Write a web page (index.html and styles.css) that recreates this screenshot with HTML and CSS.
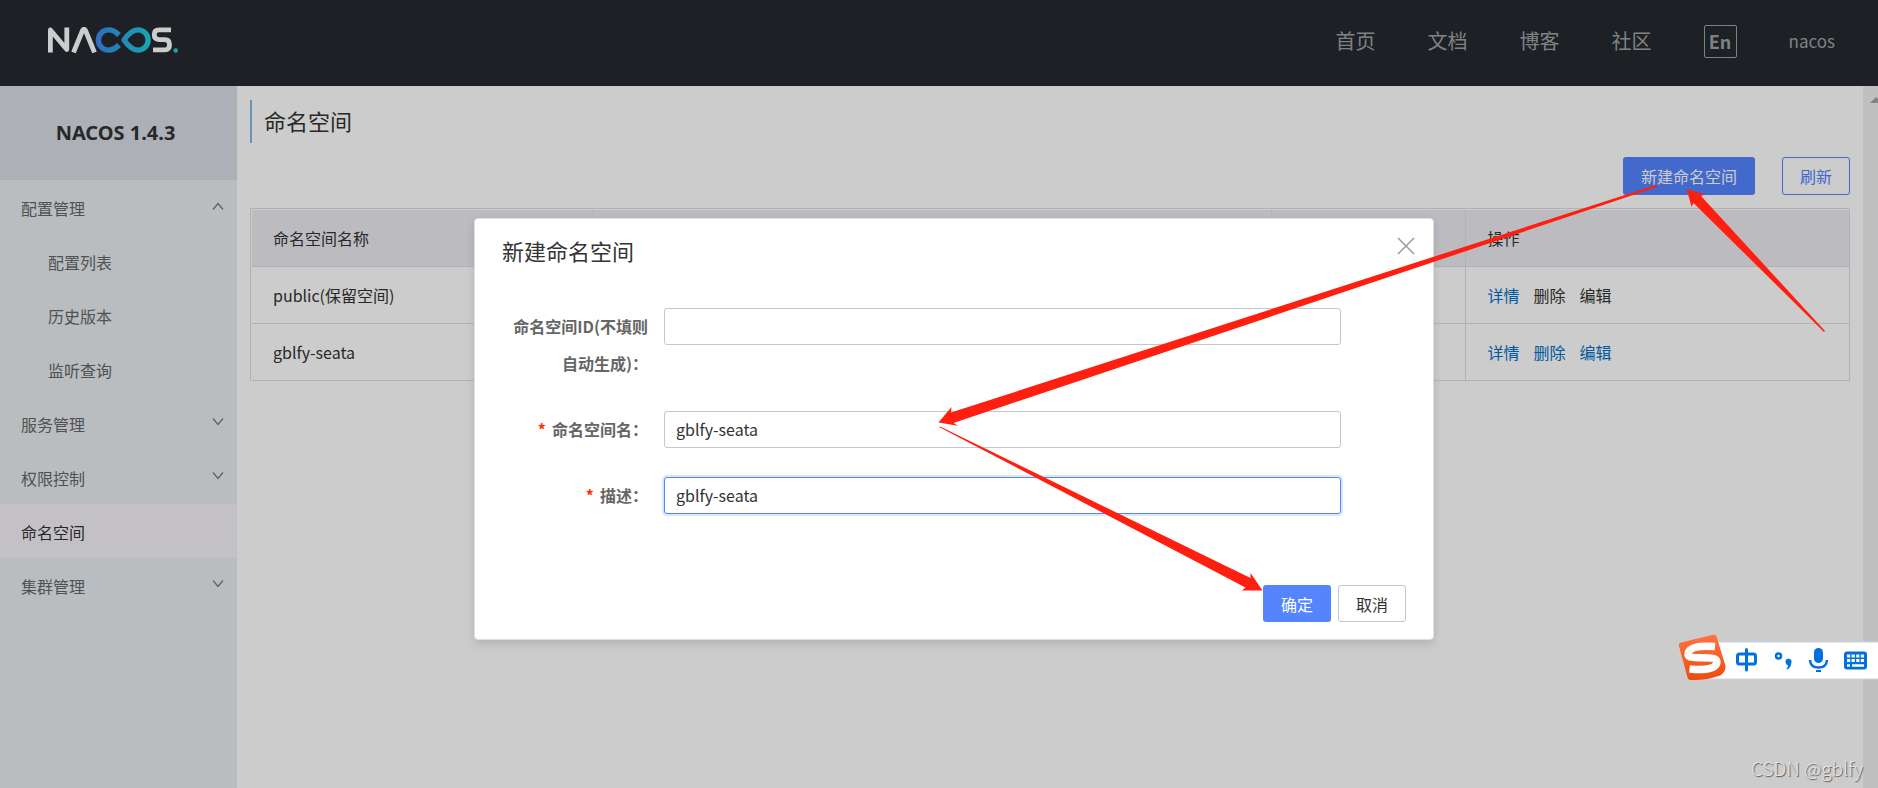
FILE: index.html
```html
<!DOCTYPE html>
<html lang="zh-CN">
<head>
<meta charset="utf-8">
<title>Nacos</title>
<link rel="stylesheet" href="styles.css">
</head>
<body>
<div class="app">
  <header class="topbar">
    <a class="brand" href="#" aria-label="Nacos">
      <svg class="logo" viewBox="0 0 130 26" fill="none">
        <defs>
          <linearGradient id="loop" x1="48" y1="0" x2="103" y2="0" gradientUnits="userSpaceOnUse">
            <stop offset="0" stop-color="#3f87f0"/><stop offset="1" stop-color="#1cd0da"/>
          </linearGradient>
        </defs>
        <g stroke="#fff" stroke-width="4.8" stroke-linejoin="round">
          <path d="M2.400 25.500V3L18.800 22.500V.5"/>
          <path d="M25.500 25.500L34.500 3.500Q36 1 37.500 3.500L46.500 25.500"/>
          <path d="M123 2.900H111Q106.200 2.900 106.200 7.600T111 12.700H117Q121.500 12.700 121.500 17.700T117 22.800H105"/>
        </g>
        <path d="M71 8Q66 2.900 60.500 2.900A10.100 10.100 0 0 0 60.500 23.100Q66 23.100 71 18" stroke="url(#loop)" stroke-width="5.400"/>
        <path d="M76 13Q83 2.900 90 2.900A10.100 10.100 0 0 1 90 23.100Q83 23.100 76 13Z" stroke="url(#loop)" stroke-width="5.400" stroke-linejoin="round"/>
        <circle cx="127.700" cy="23.500" r="2.300" fill="#1cd0da"/>
      </svg>
    </a>
    <nav class="topnav">
      <a href="#">首页</a>
      <a href="#">文档</a>
      <a href="#">博客</a>
      <a href="#">社区</a>
      <button class="lang" type="button">En</button>
      <a class="user" href="#">nacos</a>
    </nav>
  </header>
  <div class="body">
    <aside class="sidebar">
      <h1 class="version">NACOS 1.4.3</h1>
      <nav class="menu">
        <a class="item" href="#">配置管理<svg class="chev" viewBox="0 0 12 8"><path d="M1 7.500L6 1.500L11 7.500"/></svg></a>
        <a class="item sub" href="#">配置列表</a>
        <a class="item sub" href="#">历史版本</a>
        <a class="item sub" href="#">监听查询</a>
        <a class="item" href="#">服务管理<svg class="chev" viewBox="0 0 12 8"><path d="M1 .5L6 6.500L11 .5"/></svg></a>
        <a class="item" href="#">权限控制<svg class="chev" viewBox="0 0 12 8"><path d="M1 .5L6 6.500L11 .5"/></svg></a>
        <a class="item active" href="#">命名空间</a>
        <a class="item" href="#">集群管理<svg class="chev" viewBox="0 0 12 8"><path d="M1 .5L6 6.500L11 .5"/></svg></a>
      </nav>
    </aside>
    <main class="content">
      <h2 class="page-title">命名空间</h2>
      <div class="actions">
        <button class="btn primary tall" type="button">新建命名空间</button>
        <button class="btn outline tall" type="button">刷新</button>
      </div>
      <div class="table-wrap">
        <table class="table">
          <colgroup><col class="c-name"><col class="c-id"><col class="c-count"><col class="c-ops"></colgroup>
          <thead><tr><th>命名空间名称</th><th></th><th></th><th>操作</th></tr></thead>
          <tbody>
            <tr><td>public(保留空间)</td><td></td><td></td><td><div class="ops"><a href="#">详情</a><span>删除</span><span>编辑</span></div></td></tr>
            <tr><td>gblfy-seata</td><td></td><td></td><td><div class="ops"><a href="#">详情</a><a href="#">删除</a><a href="#">编辑</a></div></td></tr>
          </tbody>
        </table>
      </div>
    </main>
    <div class="scrollbar"><svg class="scroll-arrow" viewBox="0 0 8 6"><path d="M0 6L6 0L8 2V6Z"/></svg></div>
  </div>
</div>

<div class="overlay">
  <form class="dialog" role="dialog" aria-labelledby="dlg-title">
    <div class="dialog-head">
      <h2 class="dialog-title" id="dlg-title">新建命名空间</h2>
      <button class="close" type="button" aria-label="关闭"><svg viewBox="0 0 18 18"><path d="M1 1L17 17M17 1L1 17"/></svg></button>
    </div>
    <div class="fields">
      <div class="field">
        <label for="ns-id">命名空间ID(不填则自动生成)：</label>
        <input id="ns-id" type="text">
      </div>
      <div class="field">
        <label class="required" for="ns-name">命名空间名：</label>
        <input id="ns-name" type="text" value="gblfy-seata">
      </div>
      <div class="field">
        <label class="required" for="ns-desc">描述：</label>
        <input class="focused" id="ns-desc" type="text" value="gblfy-seata">
      </div>
    </div>
    <div class="dialog-foot">
      <button class="btn primary" type="button">确定</button>
      <button class="btn normal" type="button">取消</button>
    </div>
  </form>
</div>

<svg class="arrows" width="1878" height="788" viewBox="0 0 1878 788" aria-hidden="true">
  <path d="M1656 185L1657 187L953.500 423L958 425.700L938.500 422.500L951.500 407L951 412.500Z"/>
  <path d="M1825 331L1824 332L1693.500 203L1691.500 206.700L1686.700 189L1704.700 194.500L1701 196Z"/>
  <path d="M939 427L940 426.500L1250.500 578L1250.500 573L1262.500 590.500L1242 590.500L1245.500 587.500Z"/>
</svg>

<div class="ime">
  <svg width="200" height="48" viewBox="0 0 200 48" aria-hidden="true">
    <defs><linearGradient id="tile" x1="0" y1="0" x2="0" y2="1"><stop offset="0" stop-color="#ff7440"/><stop offset="1" stop-color="#f04a0c"/></linearGradient></defs>
    <path d="M36 8H200V45H28Z" fill="#fff"/>
    <path d="M36 8H200M28 45H200" stroke="#c5d3e3"/>
    <path d="M3 8.500L35 .8Q38 0 38.700 3L47.500 32Q48 38 42 41.500Q28 46.500 13 46Q10 46 9.400 43L1 12Q.5 9 3 8.500Z" fill="url(#tile)"/>
    <path d="M37 12.500Q10 10.500 10 20.500C10 27.500 39 19.500 39 28Q38 37.500 11.500 35" fill="none" stroke="#fff" stroke-width="7.500"/>
    <g fill="none" stroke="#0070dc" stroke-width="3">
      <rect x="59.500" y="20" width="18" height="10" rx="2"/>
      <path d="M68.500 15.500V36" stroke-linecap="round"/>
      <circle cx="100.500" cy="22" r="2.500" stroke-width="2.500"/>
      <path d="M132 26Q132.500 33.500 140.500 33.500T149 26" stroke-width="2.500"/>
    </g>
    <g fill="#0070dc">
      <path d="M107.500 27.500A3 3 0 0 1 113.500 28Q113 34 109 35.500L108.500 34.500Q110.500 33 110 31.500Q107.500 30.500 107.500 27.500Z"/>
      <rect x="136" y="14" width="9" height="15" rx="4.500"/>
      <rect x="138" y="36" width="5" height="2"/>
      <rect x="166" y="17.500" width="23" height="18" rx="3"/>
    </g>
    <path d="M169 22H186M169 26.500H186" stroke="#fff" stroke-width="3" stroke-dasharray="3.200 1.400"/>
    <path d="M169 31.500H172M174 31.500H186" stroke="#fff" stroke-width="2.500"/>
  </svg>
</div>
<div class="watermark">CSDN @gblfy</div>
</body>
</html>
```

FILE: styles.css
```css
* { box-sizing: border-box; }

body {
  margin: 0;
  font: 16px/24px "Noto Sans CJK SC", "Noto Sans", sans-serif;
  color: #333;
  overflow: hidden;
}

a { color: #0070cc; text-decoration: none; }
button, input { font: inherit; }

.app { display: flex; flex-direction: column; min-height: 100vh; }

.topbar {
  display: flex;
  justify-content: space-between;
  align-items: center;
  height: 86px;
  padding: 0 43px 4px 48px;
  background: #252a2f;
}
.brand { display: block; margin-bottom: 2px; }
.logo { display: block; width: 130px; height: 26px; }
.topnav { display: flex; align-items: center; gap: 52px; font-size: 20px; }
.topnav a { color: #a0a2a4; }
.topnav .user { font-size: 17px; }
.lang {
  width: 33px;
  height: 33px;
  padding: 0;
  border: 1px solid #a0a2a4;
  border-radius: 2px;
  background: none;
  color: #a0a2a4;
  font-size: 18px;
  font-weight: 700;
  line-height: 28px;
}

.body { display: flex; flex: 1; }

.sidebar { width: 237px; background: #e8edf1; }
.version {
  margin: 0;
  padding-right: 6px;
  background: #d9dde4;
  font: bold 20px/94px "Noto Sans", sans-serif;
  text-align: center;
}
.item {
  display: flex;
  align-items: center;
  justify-content: space-between;
  height: 54px;
  padding: 2px 13px 0 21px;
  color: #666;
}
.sub { padding-left: 48px; }
.active { background: #f4f2f7; color: #333; }
.chev { width: 12px; height: 8px; margin-bottom: 4px; fill: none; stroke: #777; stroke-width: 1.2; }

.content { flex: 1; padding: 14px 13px; }
.page-title {
  height: 43px;
  margin: 0 0 14px;
  padding-left: 12px;
  border-left: 2px solid #88b7e0;
  font-size: 22px;
  font-weight: 400;
  line-height: 41px;
}
.actions { display: flex; justify-content: flex-end; gap: 27px; margin-bottom: 13px; }

.btn {
  height: 37px;
  padding: 0 17px;
  border: 1px solid transparent;
  border-radius: 3px;
  background: #fff;
  color: #333;
  line-height: 32px;
}
.tall { height: 38px; }
.primary { background: #5584ff; color: #fff; }
.outline { background: none; border-color: #5584ff; color: #5584ff; }
.normal { border-color: #c4c6cf; }

.table-wrap { padding: 1px 0 0 1px; border: 1px solid #dcdee3; border-width: 1px 0 0 1px; }
.table { width: 100%; border-collapse: separate; border-spacing: 0; table-layout: fixed; }
.c-name { width: 21.4%; }
.c-id { width: 42.4%; }
.c-count { width: 12.2%; }
.c-ops { width: 24%; }
.table th, .table td {
  height: 57px;
  padding: 0 21px;
  border-right: 1px solid #dcdee3;
  border-bottom: 1px solid #dcdee3;
  font-weight: 400;
  text-align: left;
}
.table th { background: #ebecf0; }
.ops { display: flex; gap: 14px; }

.scrollbar { width: 15px; padding: 11px 0 0 7px; background: #f1f1f1; }
.scroll-arrow { display: block; width: 8px; height: 6px; fill: #a3a3a3; }

.overlay {
  position: absolute;
  inset: 0;
  display: flex;
  justify-content: center;
  align-items: flex-start;
  padding: 218px 0 0 30px;
  background: rgba(0, 0, 0, .2);
}
.dialog {
  width: 960px;
  padding: 14px 27px 17px;
  border: 1px solid #dcdee3;
  border-radius: 4px;
  background: #fff;
  box-shadow: 0 4px 8px rgba(0, 0, 0, .12);
}
.dialog-head { display: flex; justify-content: space-between; margin-bottom: 40px; }
.dialog-title { margin: 0; font-size: 22px; font-weight: 400; line-height: 35px; }
.close { width: 18px; height: 18px; margin: 4px -9px 0 0; padding: 0; border: 0; background: none; }
.close svg { display: block; fill: none; stroke: #999; stroke-width: 1.5; }

.fields { display: grid; gap: 29px; }
.field { display: grid; grid-template-columns: 146px 1fr; gap: 16px; padding-right: 65px; line-height: 37px; }
.field label { color: #666; font-weight: 700; text-align: right; }
.required::before { content: "*"; margin-right: 6px; color: #ff3000; }
.field input {
  width: 100%;
  height: 37px;
  padding: 0 11px;
  border: 1px solid #c4c6cf;
  border-radius: 3px;
  background: #fff;
  color: #333;
  outline: 0;
}
.field .focused { border-color: #5584ff; box-shadow: 0 0 0 2px rgba(85, 132, 255, .2); }
.dialog-foot { display: flex; justify-content: flex-end; gap: 7px; margin-top: 71px; }

.arrows { position: absolute; top: 0; left: 0; fill: #ff1f10; pointer-events: none; }

.ime { position: absolute; top: 634px; right: 0; }
.ime svg { display: block; }

.watermark {
  position: absolute;
  right: 15px;
  bottom: 6px;
  color: #e4e4e4;
  font-size: 19px;
  font-weight: 300;
  line-height: 28px;
  text-shadow: 1px 1px 1px #555;
}
```
